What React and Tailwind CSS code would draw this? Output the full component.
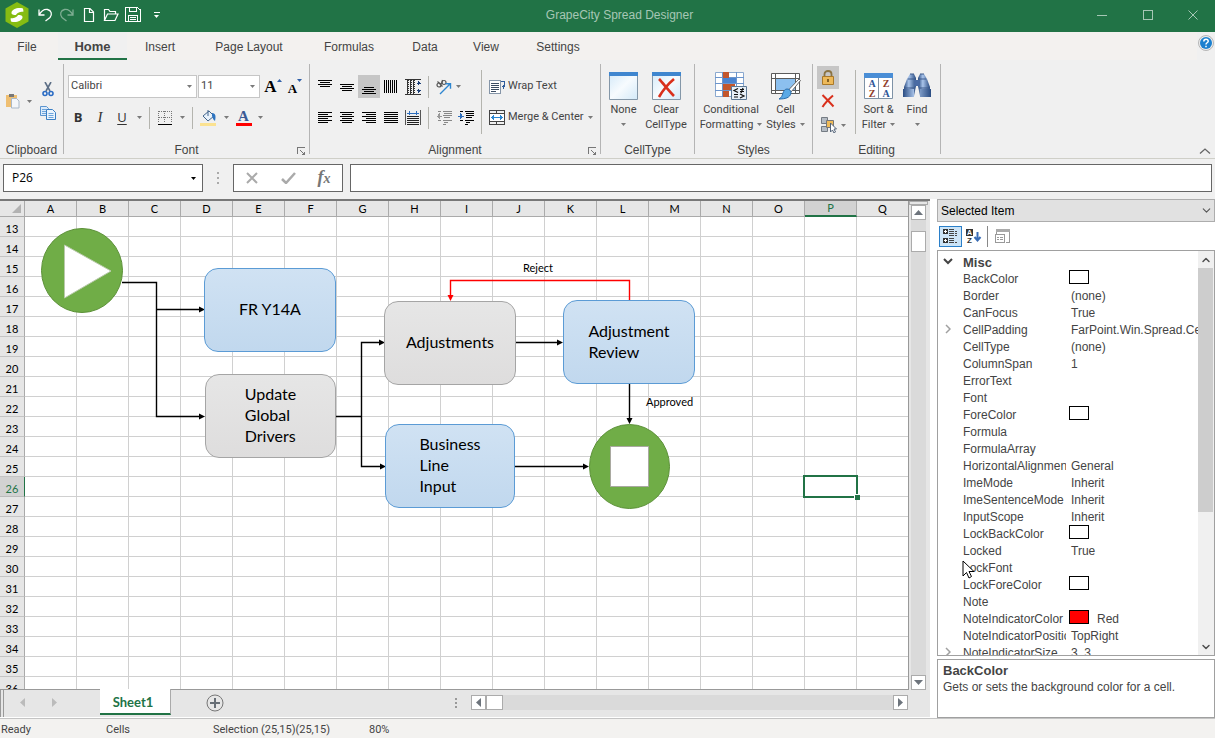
// App.jsx

import { ChevronDown, ChevronUp } from "lucide-react";

const TABS = [
  { name: "File", width: "w-[58px] pr-1" },
  { name: "Home", width: "w-[69px]", active: true },
  { name: "Insert", width: "w-[66px]" },
  { name: "Page Layout", width: "w-[112px]" },
  { name: "Formulas", width: "w-[88px]" },
  { name: "Data", width: "w-[64px]" },
  { name: "View", width: "w-[58px]" },
  { name: "Settings", width: "w-[86px]" },
];

const COLUMNS = "ABCDEFGHIJKLMNOPQ".split("");
const ROWS = Array.from({ length: 24 }, (_, i) => i + 13);

const PROPERTIES = [
  { name: "BackColor", swatch: "bg-white" },
  { name: "Border", value: "(none)" },
  { name: "CanFocus", value: "True" },
  { name: "CellPadding", value: "FarPoint.Win.Spread.CellPadding", expandable: true },
  { name: "CellType", value: "(none)" },
  { name: "ColumnSpan", value: "1" },
  { name: "ErrorText" },
  { name: "Font" },
  { name: "ForeColor", swatch: "bg-white" },
  { name: "Formula" },
  { name: "FormulaArray" },
  { name: "HorizontalAlignment", value: "General" },
  { name: "ImeMode", value: "Inherit" },
  { name: "ImeSentenceMode", value: "Inherit" },
  { name: "InputScope", value: "Inherit" },
  { name: "LockBackColor", swatch: "bg-white" },
  { name: "Locked", value: "True" },
  { name: "LockFont", cursor: true },
  { name: "LockForeColor", swatch: "bg-white" },
  { name: "Note" },
  { name: "NoteIndicatorColor", value: "Red", swatch: "bg-[#ff0000]" },
  { name: "NoteIndicatorPosition", value: "TopRight" },
  { name: "NoteIndicatorSize", value: "3, 3", expandable: true },
];

/* ---------- Small shared pieces ---------- */

function Arrow({ className = "text-[#7a7a7a]" }) {
  return (
    <svg width="5" height="3" viewBox="0 0 5 3" className={`shrink-0 ${className}`} aria-hidden="true">
      <path d="M0 0h5L2.5 3z" fill="currentColor" />
    </svg>
  );
}

function Icon({ w = 16, h = 16, crisp, children }) {
  return (
    <svg
      width={w}
      height={h}
      viewBox={`0 0 ${w} ${h}`}
      fill="none"
      className="shrink-0"
      shapeRendering={crisp ? "crispEdges" : "auto"}
      aria-hidden="true"
    >
      {children}
    </svg>
  );
}

function ToolButton({ label, className = "w-[22px]", active, children }) {
  return (
    <button
      type="button"
      aria-label={label}
      className={`flex h-[23px] shrink-0 items-center justify-center ${className} ${active ? "bg-[#c6c6c6]" : ""}`}
    >
      {children}
    </button>
  );
}

function Divider({ className = "h-[22px]" }) {
  return <div className={`w-px shrink-0 bg-[#b4b4ae] ${className}`} />;
}

function Group({ title, width, launcher, children }) {
  return (
    <section className={`flex h-[90px] shrink-0 flex-col border-r border-[#b4b4b4] ${width}`}>
      <div className="flex-1">{children}</div>
      <div className="relative h-[14px] text-center text-xs leading-5 text-[#444]">
        {title}
        {launcher && (
          <button type="button" aria-label={`${title} settings`} className="absolute right-1 top-[7px]">
            <Icon w={8} h={8} crisp>
              <path d="M0 6V0h7M3 3l4 4M7 4v3H4" stroke="#777" transform="translate(.5 .5)" />
            </Icon>
          </button>
        )}
      </div>
    </section>
  );
}

function BigButton({ lines, width, arrow, children }) {
  return (
    <button
      type="button"
      className={`flex shrink-0 flex-col items-center pt-[5px] font-[Roboto] text-[11px] leading-[15px] text-[#444] ${width}`}
    >
      <span className="flex h-[33px] items-center justify-center">{children}</span>
      <span className="whitespace-nowrap">{lines[0]}</span>
      <span className="flex h-[15px] items-center gap-1 whitespace-nowrap">
        {lines[1]}
        {arrow && <Arrow />}
      </span>
    </button>
  );
}

/* ---------- Title bar ---------- */

function TitleBar() {
  return (
    <header className="flex h-8 shrink-0 items-center bg-[#217346] pb-[2px]">
      <div className="flex items-center pl-1">
        <Icon w={26} h={28}>
          <path d="M13 1l11.500 6.500v13L13 27 1.500 20.500v-13z" fill="#86bc12" />
          <path d="M19 7.500c-5-1.500-11 .5-11.500 4-.3 2 2 2.500 4.500 2.500 1.500-3 5-3 7.500-3.500z" fill="#fff" />
          <path d="M7 20.500c5 1.500 11-.5 11.500-4 .3-2-2-2.500-4.500-2.500-1.500 3-5 3-7.500 3.500z" fill="#fff" />
        </Icon>
        <button type="button" aria-label="Undo" className="ml-[7px]">
          <Icon w={16} h={16}>
            <path d="M2 2.500V8h5.500M2 8c3-5 6-6 8.500-5.500 4 .8 5 5 2.500 8L8.500 14" stroke="#fff" strokeWidth="1.300" />
          </Icon>
        </button>
        <button type="button" aria-label="Redo" className="ml-[6px]">
          <Icon w={16} h={16}>
            <path d="M14 2.500V8H8.500M14 8C11 3 8 2 5.500 2.500c-4 .8-5 5-2.500 8L7.500 14" stroke="#7fae93" strokeWidth="1.300" />
          </Icon>
        </button>
        <button type="button" aria-label="New" className="ml-2">
          <Icon w={12} h={16}>
            <path d="M1.500 1.500h5.500l3.500 3.500v9.500h-9zM6.500 1.500v4h4" stroke="#fff" strokeWidth="1.200" />
          </Icon>
        </button>
        <button type="button" aria-label="Open" className="ml-2">
          <Icon w={16} h={14}>
            <path d="M1.500 12.500V1.500h4l1.500 2h5.500v2.500M1.500 12.500l3-6.500h10.500l-3 6.500z" stroke="#fff" strokeWidth="1.200" />
          </Icon>
        </button>
        <button type="button" aria-label="Save" className="ml-[6px]">
          <Icon w={16} h={16} crisp>
            <path d="M.5.5h12l3 2.500v11.500H.5zM4.500.5v4h7v-4M3.500 14V8.500h9V14M5 10.500h6M5 12.500h6" stroke="#fff" />
          </Icon>
        </button>
        <button type="button" aria-label="Customize" className="ml-3 flex w-[7px] flex-col items-center gap-[2px]">
          <span className="h-px w-[6px] bg-white" />
          <Arrow className="text-white" />
        </button>
      </div>
      <h1 className="flex-1 text-center text-xs text-[#a6c7b5]">GrapeCity Spread Designer</h1>
      <div className="flex">
        <button type="button" aria-label="Minimize" className="flex w-[46px] items-center justify-center">
          <Icon w={10} h={10} crisp><path d="M0 5.500h10" stroke="#a6c7b5" /></Icon>
        </button>
        <button type="button" aria-label="Maximize" className="flex w-[46px] items-center justify-center">
          <Icon w={10} h={10} crisp><path d="M.5.5h9v9h-9z" stroke="#a6c7b5" /></Icon>
        </button>
        <button type="button" aria-label="Close" className="flex w-[44px] items-center justify-center">
          <Icon w={10} h={10}><path d="M.5.5l9 9M9.500.5l-9 9" stroke="#a6c7b5" /></Icon>
        </button>
      </div>
    </header>
  );
}

/* ---------- Ribbon ---------- */

function RibbonTabs() {
  return (
    <nav className="flex h-7 shrink-0 bg-[#f3f1ef]">
      {TABS.map((tab) => (
        <button
          key={tab.name}
          type="button"
          className={`h-7 border-b-2 pt-[3px] text-[#444] ${tab.width} ${
            tab.active ? "border-[#217346] bg-[#f0f0f0] text-[13px] font-bold" : "border-transparent text-xs"
          }`}
        >
          {tab.name}
        </button>
      ))}
      <button type="button" aria-label="Help" className="ml-auto flex w-[18px] justify-center bg-[#f0f0f0] pt-[3px]">
        <Icon w={16} h={16}>
          <circle cx="8" cy="8" r="7.500" fill="#eee" stroke="#b5b5b5" />
          <circle cx="8" cy="8" r="6" fill="#1b80cf" />
          <path d="M5.800 6.500c0-3 4.400-3 4.400-.3 0 1.600-2.200 1.500-2.200 3.300M8 10.800v1.500" stroke="#fff" strokeWidth="1.500" />
        </Icon>
      </button>
    </nav>
  );
}

function ClipboardGroup() {
  return (
    <Group title="Clipboard" width="w-16">
      <div className="flex pl-[5px]">
        <button type="button" aria-label="Paste" className="flex h-[74px] items-center gap-[7px]">
          <Icon w={15} h={16}>
            <path d="M1 2h11v12H1z" fill="#efbf72" />
            <path d="M4 1h5v3H4z" fill="#777" />
            <path d="M6.500 5.500h5l2.500 2.500v7H6.500z" fill="#f3f6fa" stroke="#a9b8c8" />
          </Icon>
          <Arrow />
        </button>
        <div className="flex flex-col pl-[7px] pt-[14px]">
          <ToolButton label="Cut" className="w-[17px]">
            <Icon w={12} h={15}>
              <path d="M3 0l5 9M9 0L4 9" stroke="#5d6f86" strokeWidth="1.600" />
              <circle cx="3" cy="11.500" r="2" stroke="#2b6cc4" strokeWidth="1.600" />
              <circle cx="9" cy="11.500" r="2" stroke="#2b6cc4" strokeWidth="1.600" />
            </Icon>
          </ToolButton>
          <ToolButton label="Copy" className="w-[17px]">
            <Icon w={16} h={14}>
              <path d="M.5.5h6l2 2v7h-8z" fill="#dcebfa" stroke="#5b94cf" />
              <path d="M6.500 3.500h6l3 3v7h-9z" fill="#eaf4fd" stroke="#3b7fc4" />
              <path d="M2 3.500h4M2 5.500h4M2 7.500h4M8.500 7.500h5M8.500 9.500h5M8.500 11.500h5" stroke="#6ea5dc" />
            </Icon>
          </ToolButton>
        </div>
      </div>
    </Group>
  );
}

function RibbonSelect({ label, value, width }) {
  return (
    <div className={`relative ${width}`}>
      <select
        aria-label={label}
        defaultValue={value}
        className="block h-[23px] w-full appearance-none border border-[#c6c6c6] bg-white pl-[2px] font-[Roboto] text-[11px] text-[#444]"
      >
        <option>{value}</option>
      </select>
      <div className="pointer-events-none absolute inset-y-0 right-[5px] flex items-center">
        <Arrow />
      </div>
    </div>
  );
}

function FontGroup() {
  return (
    <Group title="Font" width="w-[246px]" launcher>
      <div className="flex items-center pl-1 pt-[11px]">
        <RibbonSelect label="Font name" value="Calibri" width="w-[129px]" />
        <div className="w-px" />
        <RibbonSelect label="Font size" value="11" width="w-[62px]" />
        <div className="w-[2px]" />
        <ToolButton label="Grow font">
          <span className="font-['Liberation_Serif'] text-[17px] font-bold leading-none text-black">A</span>
          <svg width="5" height="3" className="mb-3"><path d="M0 3h5L2.500 0z" fill="#2f5fa8" /></svg>
        </ToolButton>
        <ToolButton label="Shrink font">
          <span className="pt-1 font-['Liberation_Serif'] text-[13px] font-bold leading-none text-black">A</span>
          <svg width="5" height="3" className="mb-3"><path d="M0 0h5L2.500 3z" fill="#2f5fa8" /></svg>
        </ToolButton>
      </div>
      <div className="flex items-center pl-[3px] pt-2 font-['Open_Sans'] text-[13px] text-[#333]">
        <ToolButton label="Bold"><b>B</b></ToolButton>
        <ToolButton label="Italic"><i className="font-['Liberation_Serif'] text-[15px]">I</i></ToolButton>
        <ToolButton label="Underline"><span className="underline underline-offset-2">U</span></ToolButton>
        <ToolButton label="Underline style" className="w-[12px]"><Arrow /></ToolButton>
        <div className="w-1" />
        <Divider />
        <ToolButton label="Borders" className="w-[42px] gap-2">
          <Icon w={14} h={14} crisp>
            <path d="M.5.500h13M.5 6.500h13M.5 0v12M6.500 0v12M13.500 0v12" stroke="#777" strokeDasharray="1 1" />
            <path d="M0 13h14" stroke="#000" strokeWidth="1" />
          </Icon>
          <Arrow />
        </ToolButton>
        <Divider />
        <ToolButton label="Fill color" className="w-[42px] gap-[7px]">
          <Icon w={17} h={17}>
            <path d="M3 7l6-5 5 5-6 5z" fill="#e7f1fb" stroke="#43658c" />
            <path d="M8 7V1" stroke="#43658c" />
            <path d="M12 4c4 0 4 4 3 8-2-1-2-3-3-5z" fill="#2e74c0" />
            <path d="M0 14h16v3H0z" fill="#fbe291" />
          </Icon>
          <Arrow />
        </ToolButton>
        <ToolButton label="Font color" className="w-[28px] gap-[6px]">
          <span className="flex w-4 flex-col items-center border-b-[3px] border-[#ff0000] font-['Liberation_Serif'] text-[15px] font-bold leading-[13px] text-[#3a5a95]">
            A
          </span>
          <Arrow />
        </ToolButton>
      </div>
    </Group>
  );
}

function HLines({ d, color = "#000" }) {
  return (
    <Icon w={14} h={14} crisp>
      <path d={d} stroke={color} />
    </Icon>
  );
}

function AlignmentGroup() {
  return (
    <Group title="Alignment" width="w-[291px]" launcher>
      <div className="flex pl-1">
        <div className="pt-[11px]">
          <div className="flex items-center">
            <ToolButton label="Align top"><HLines d="M0 .5h14M2 2.500h10M0 4.500h14M2 6.500h10" /></ToolButton>
            <ToolButton label="Align middle"><HLines d="M0 4.500h14M2 6.500h10M0 8.500h14M2 10.500h10" /></ToolButton>
            <ToolButton label="Align bottom" active><HLines d="M2 7.500h10M0 9.500h14M2 11.500h10M0 13.500h14" /></ToolButton>
            <ToolButton label="Vertical justify">
              <HLines d="M.5 0v13M2.500 0v13M4.500 0v13M6.500 0v13M8.500 0v13M10.500 0v13M12.500 0v13" />
            </ToolButton>
            <ToolButton label="Vertical distribute">
              <Icon w={16} h={16} crisp>
                <path d="M0 .5h16M0 15.500h16M2.500 1v14M5.500 1v14M8.500 1v14" stroke="#333" />
                <path d="M3.500 1v14M6.500 1v14M9.500 1v14" stroke="#333" strokeDasharray="1 1" />
                <path d="M13.500 2v4M13.500 10v4M11.500 4.500h4M11.500 11.500h4M12.500 3.500h2M12.500 12.500h2" stroke="#1c3f77" />
              </Icon>
            </ToolButton>
            <div className="w-1" />
            <Divider />
            <ToolButton label="Orientation" className="w-[38px] gap-1">
              <Icon w={17} h={16}>
                <circle cx="4" cy="6" r="2" stroke="#555" strokeWidth="1.200" />
                <path d="M2.500 2.500l5 5M7.500 1l-1 4" stroke="#555" strokeWidth="1.200" />
                <circle cx="9" cy="3.500" r="2" stroke="#555" strokeWidth="1.200" />
                <path d="M5 15L15 5M10.500 4.800h5v5" stroke="#2e86d0" strokeWidth="1.400" />
              </Icon>
              <Arrow />
            </ToolButton>
          </div>
          <div className="flex items-center pt-2">
            <ToolButton label="Align left">
              <HLines d="M0 1.500h14M0 3.500h10M0 5.500h14M0 7.500h10M0 9.500h14M0 11.500h10" />
            </ToolButton>
            <ToolButton label="Align center">
              <HLines d="M0 1.500h14M2 3.500h10M0 5.500h14M2 7.500h10M0 9.500h14M2 11.500h10" />
            </ToolButton>
            <ToolButton label="Align right">
              <HLines d="M0 1.500h14M4 3.500h10M0 5.500h14M4 7.500h10M0 9.500h14M4 11.500h10" />
            </ToolButton>
            <ToolButton label="Justify">
              <HLines d="M0 1.500h14M0 3.500h14M0 5.500h14M0 7.500h14M0 9.500h14M0 11.500h14" />
            </ToolButton>
            <ToolButton label="Distribute">
              <Icon w={16} h={16} crisp>
                <path d="M.5 0v15M15.500 0v15" stroke="#555" />
                <path d="M2 3h12M4.500 1v4M11.500 1v4" stroke="#2f6fbd" />
                <path d="M2 6.500h12M2 8.500h12M2 10.500h12M2 12.500h12M2 14.500h12" stroke="#222" />
              </Icon>
            </ToolButton>
            <div className="w-1" />
            <Divider />
            <div className="w-1" />
            <ToolButton label="Decrease indent">
              <Icon w={16} h={14} crisp>
                <path d="M2 .5h3M7 .5h9M8 2.500h8M7 4.500h9M8 6.500h6M2 9.500h3M7 9.500h9M8 11.500h4M7 13.500h3" stroke="#888" />
                <path d="M1 5h5M2.500 3v4M3.500 2v6" stroke="#999" />
              </Icon>
            </ToolButton>
            <ToolButton label="Increase indent">
              <Icon w={16} h={14} crisp>
                <path d="M2 .5h3M7 .5h9M8 2.500h8M8 4.500h8M8 6.500h6M2 9.500h3M7 9.500h9M8 11.500h4M7 13.500h3" stroke="#000" />
                <path d="M0 5h6M3.500 3v4M2.500 2v6" stroke="#2f6fbd" />
              </Icon>
            </ToolButton>
          </div>
        </div>
        <div className="pl-1 pt-[6px]">
          <Divider className="h-16" />
        </div>
        <div className="flex flex-col gap-2 pl-[7px] pt-[11px] font-[Roboto] text-[11px] text-[#444]">
          <button type="button" className="flex h-[23px] items-center gap-[2px]">
            <Icon w={17} h={16} crisp>
              <path d="M.5 1.500h11v13H.5z" fill="#fff" stroke="#8595a8" />
              <path d="M2 4.500h8M2 6.500h8M2 8.500h8M2 10.500h8M2 12.500h5" stroke="#3c4d63" />
              <path d="M12 2.500h3.500v5H13M14 5.500v4" stroke="#2e5c9c" />
            </Icon>
            Wrap Text
          </button>
          <button type="button" className="flex h-[23px] items-center">
            <Icon w={16} h={16} crisp>
              <path d="M.5.5h15v14H.5zM0 3.500h16M0 11.500h16M7.500 0v3M7.500 12v3" stroke="#444" />
              <path d="M1 4h14v7H1z" fill="#fff" />
              <path d="M2 7.500h12M4.500 5v5M3.500 6v3M11.500 5v5M12.500 6v3" stroke="#2b86d1" />
            </Icon>
            <span className="whitespace-nowrap pl-[3px] pr-1">Merge &amp; Center</span>
            <Arrow />
          </button>
        </div>
      </div>
    </Group>
  );
}

function WindowShape() {
  return (
    <>
      <defs>
        <linearGradient id="sheetFill" x1="0" y1="0" x2="1" y2="1">
          <stop offset="0" stopColor="#d3e9f8" />
          <stop offset=".5" stopColor="#f7fbfe" />
          <stop offset="1" stopColor="#d3e9f8" />
        </linearGradient>
      </defs>
      <path d="M.5.5h28v27H.5z" fill="url(#sheetFill)" stroke="#8497a8" />
      <path d="M0 0h29v4H0z" fill="#3f86cf" />
    </>
  );
}

function CellTypeGroup() {
  return (
    <Group title="CellType" width="w-[94px]">
      <div className="flex pl-[2px]">
        <BigButton lines={["None", ""]} width="w-[41px]" arrow>
          <Icon w={29} h={28}><WindowShape /></Icon>
        </BigButton>
        <BigButton lines={["Clear", "CellType"]} width="w-[44px]">
          <Icon w={29} h={28}>
            <WindowShape />
            <path d="M7 7c4 4 9 11 15 17M22 7C16 12 11 18 7 25" stroke="#d9301c" strokeWidth="2.600" />
          </Icon>
        </BigButton>
      </div>
    </Group>
  );
}

function StylesGroup() {
  return (
    <Group title="Styles" width="w-[118px]">
      <div className="flex pl-1">
        <BigButton lines={["Conditional", "Formatting"]} width="w-[64px]" arrow>
          <Icon w={32} h={30}>
            <path d="M.5 1.500h28v24H.5z" fill="#fff" stroke="#8ba9cf" />
            <path d="M0 6.500h29M0 12.500h29M0 19.500h29M7.500 1v25M21.500 1v25" stroke="#6c95cc" />
            <path d="M8 1h6v6H8zM8 13h12v6H8zM8 20h6v6H8z" fill="#c2562c" />
            <path d="M8 7h13v5H8z" fill="#4a83cf" />
            <path d="M16.500 15.500h15v13h-15z" fill="#e8f0f8" stroke="#5c7894" />
            <path d="M23 17.500l-4 2 4 2M19 23.500h4M25 18.500h4M25 20.500h4M28 17l-2 5M25 23l4 2-4 2M19 26h4" stroke="#111" strokeWidth="1.200" />
          </Icon>
        </BigButton>
        <BigButton lines={["Cell", "Styles"]} width="w-[45px]" arrow>
          <Icon w={32} h={30}>
            <path d="M1.500 2.500h28v20h-28zM1 7.500h29M5.500 2v21M25.500 2v21M1 19.500h29" fill="#fff" stroke="#5b5b5b" />
            <path d="M6 8h19v11H6z" fill="#8cc0ef" />
            <path d="M30.500 9.500L21 21l-2.500-2L29 8z" fill="#fff" stroke="#666" />
            <path d="M17 18c3 0 4 2 4 4-1 5-6 6-12 6 3-2 3-3 4-6 .5-2 2-4 4-4z" fill="#5aa9e6" stroke="#2a6dac" />
          </Icon>
        </BigButton>
      </div>
    </Group>
  );
}

function EditingGroup() {
  return (
    <Group title="Editing" width="w-[128px]">
      <div className="flex pl-1">
        <div className="flex w-[38px] flex-col pt-[2px]">
          <ToolButton label="Lock" active>
            <Icon w={14} h={15}>
              <path d="M3.500 7V4c0-4 7-4 7 0v3" stroke="#8b7342" strokeWidth="1.800" />
              <path d="M1.500 6.500h11v8h-11z" fill="#edb95a" stroke="#a97828" />
              <path d="M7 9v3" stroke="#6a4b16" strokeWidth="1.600" />
            </Icon>
          </ToolButton>
          <ToolButton label="Clear">
            <Icon w={14} h={14}>
              <path d="M1.500 1c3 3 7 7 11 11.500M12 1.500C8 5 4 9 1.500 13" stroke="#d9301c" strokeWidth="2" />
            </Icon>
          </ToolButton>
          <button type="button" aria-label="Select" className="flex h-[26px] items-center gap-1 pl-1">
            <Icon w={16} h={16}>
              <path d="M.5.5h6v6h-6zM.5 9.500h6v5h-6z" fill="#b5bcc4" stroke="#747b83" />
              <path d="M5.500 3.500h7v7h-7z" fill="#f0bb58" stroke="#777" />
              <path d="M9.500 6v9l2-2 1.500 3 1.500-1-1.500-3h2.500z" fill="#fff" stroke="#55657a" />
            </Icon>
            <Arrow />
          </button>
        </div>
        <div className="pt-[6px]">
          <Divider className="h-16" />
        </div>
        <BigButton lines={["Sort &", "Filter"]} width="w-[45px]" arrow>
          <Icon w={29} h={28}>
            <path d="M.5 1.500h28v25H.5zM14.500 5v21" fill="#fff" stroke="#7e92a6" />
            <path d="M0 1h29v5H0z" fill="#4a8ed6" />
            <g fontFamily="Liberation Serif" fontSize="10" fontWeight="bold" textAnchor="middle">
              <text x="8" y="15" fill="#2d5597">A</text>
              <text x="8" y="25" fill="#8e3b2b">Z</text>
              <text x="22" y="15" fill="#8e3b2b">Z</text>
              <text x="22" y="25" fill="#2d5597">A</text>
            </g>
          </Icon>
        </BigButton>
        <BigButton lines={["Find", ""]} width="w-[32px]" arrow>
          <Icon w={28} h={28}>
            <defs>
              <linearGradient id="lens">
                <stop offset="0" stopColor="#2a4c82" />
                <stop offset=".4" stopColor="#a9c4ea" />
                <stop offset="1" stopColor="#2a4c82" />
              </linearGradient>
            </defs>
            <path d="M7 2h4l2 4v8l-2 10H1V15L4 7z" fill="url(#lens)" />
            <path d="M21 2h-4l-2 4v8l2 10h10V15l-3-8z" fill="url(#lens)" />
            <path d="M11 8h6v6h-6z" fill="#4a6ba3" />
            <path d="M0 17h11v8H0zM17 17h11v8H17z" fill="url(#lens)" />
            <path d="M7 2h4M17 2h4M5 7h8M15 7h8M1 16h11M16 16h11" stroke="#3d5a8c" />
          </Icon>
        </BigButton>
      </div>
    </Group>
  );
}

function Ribbon() {
  return (
    <div className="flex h-[99px] shrink-0 border-b border-[#cfcfc8] pt-1">
      <ClipboardGroup />
      <FontGroup />
      <AlignmentGroup />
      <CellTypeGroup />
      <StylesGroup />
      <EditingGroup />
      <button type="button" aria-label="Collapse ribbon" className="ml-auto self-end pb-1 pr-1">
        <Icon w={12} h={6}><path d="M1 5.500l5-4.500 5 4.500" stroke="#666" strokeWidth="1.300" /></Icon>
      </button>
    </div>
  );
}

function FormulaBar() {
  return (
    <div className="flex h-10 shrink-0 items-start pl-[3px] pr-[3px] pt-[5px]">
      <div className="flex h-7 w-[200px] shrink-0 items-center border border-[#666] bg-white pr-[6px]">
        <input
          aria-label="Name box"
          defaultValue="P26"
          className="min-w-0 flex-1 bg-transparent pl-2 font-['Open_Sans'] text-xs text-black outline-none"
        />
        <button type="button" aria-label="Open name list"><Arrow className="text-black" /></button>
      </div>
      <div className="flex h-7 w-[30px] shrink-0 flex-col items-center justify-center gap-[3px]">
        <span className="h-[2px] w-[2px] bg-[#aaa]" />
        <span className="h-[2px] w-[2px] bg-[#aaa]" />
        <span className="h-[2px] w-[2px] bg-[#aaa]" />
      </div>
      <div className="mr-[7px] flex h-7 w-[110px] shrink-0 items-center border border-[#666] bg-white">
        <button type="button" aria-label="Cancel" className="flex w-9 justify-center">
          <Icon w={12} h={12}><path d="M1 1l10 10M11 1L1 11" stroke="#aaa" strokeWidth="2" /></Icon>
        </button>
        <button type="button" aria-label="Enter" className="flex w-9 justify-center">
          <Icon w={15} h={12}><path d="M1 7l4 4L14 1" stroke="#aaa" strokeWidth="2.500" /></Icon>
        </button>
        <button
          type="button"
          aria-label="Insert function"
          className="w-9 font-['Liberation_Serif'] text-lg font-bold italic leading-none text-[#777]"
        >
          f<span className="text-sm">x</span>
        </button>
      </div>
      <input aria-label="Formula" className="h-7 min-w-0 flex-1 border border-[#666] bg-white px-2 text-xs outline-none" />
    </div>
  );
}

/* ---------- Spreadsheet ---------- */

function Node({ place, gray, children }) {
  return (
    <div
      className={`absolute flex items-center justify-center rounded-[14px] border bg-gradient-to-b pb-[3px] font-[Lato] text-base leading-[21px] text-black ${place} ${
        gray ? "border-[#a5a5a5] from-[#e6e6e6] to-[#dedddd]" : "border-[#5b9bd5] from-[#d0e2f3] to-[#c1d8ee]"
      }`}
    >
      <p>{children}</p>
    </div>
  );
}

function Diagram() {
  return (
    <div className="pointer-events-none absolute left-0 top-0">
      <svg width="720" height="320" viewBox="0 0 720 320" fill="none" className="absolute left-0 top-0">
        {/* Connectors */}
        <g stroke="#000" strokeWidth="1.400">
          <path d="M97 65.500h34.500v27H175M131.500 92.500v107H175" />
          <path d="M311 199.500h25.500v-74H355M336.500 199.500v50H356" />
          <path d="M491 125.500h43M490 249.500h70M604.500 167v36" />
        </g>
        <path d="M604.500 83V63.500h-179V80" stroke="#f00" strokeWidth="1.400" />
        <path
          d="M174 89.500l6 3-6 3zM174 196.500l6 3-6 3zM354 122.500l6 3-6 3zM355 246.500l6 3-6 3zM532 122.500l6 3-6 3zM558 246.500l6 3-6 3zM601.500 201l3 6 3-6z"
          fill="#000"
        />
        <path d="M422.500 78l3 6 3-6z" fill="#f00" />
        {/* Start and stop */}
        <ellipse cx="57" cy="53.500" rx="40.500" ry="42" fill="#70ad47" stroke="#5c9138" />
        <path d="M39.500 28v53L86 54z" fill="#fff" stroke="#b9c9ab" />
        <ellipse cx="604.500" cy="249.500" rx="40" ry="42" fill="#70ad47" stroke="#5c9138" />
        <path d="M585.500 229.500h38v40h-38z" fill="#fff" stroke="#a9a9a0" />
      </svg>
      <Node place="left-[179px] top-[51px] h-[84px] w-[132px]">FR Y14A</Node>
      <Node place="left-[180px] top-[157px] h-[84px] w-[131px]" gray>Update<br />Global<br />Drivers</Node>
      <Node place="left-[359px] top-[84px] h-[84px] w-[132px]" gray>Adjustments</Node>
      <Node place="left-[538px] top-[83px] h-[84px] w-[132px]">Adjustment<br />Review</Node>
      <Node place="left-[360px] top-[207px] h-[84px] w-[130px]">Business<br />Line<br />Input</Node>
      <span className="absolute left-[498px] top-[43px] font-[Lato] text-[11px] leading-4 text-black">Reject</span>
      <span className="absolute left-[621px] top-[177px] font-[Lato] text-[11px] leading-4 text-black">Approved</span>
    </div>
  );
}

function SheetGrid() {
  return (
    <div className="relative min-w-0 flex-1 overflow-hidden border-b border-r border-[#999] bg-white">
      <table className="w-[909px] table-fixed border-separate border-spacing-0 font-[Lato] text-[11px] text-black">
        <thead>
          <tr className="h-4">
            <th className="h-4 w-[25px] border-b border-r border-[#aaa] bg-[#e6e6e6] p-0" aria-label="Select all">
              <svg width="9" height="9" className="ml-[12px]"><path d="M9 0v9H0z" fill="#b2b2b2" /></svg>
            </th>
            {COLUMNS.map((col) => (
              <th
                key={col}
                className={`h-4 p-0 font-normal leading-[14px] ${
                  col === "P"
                    ? "border-b-2 border-r border-b-[#217346] border-r-[#aaa] bg-[#d2d2d2] text-[#217346]"
                    : "border-b border-r border-[#aaa] bg-[#e6e6e6]"
                }`}
              >
                {col}
              </th>
            ))}
          </tr>
        </thead>
        <tbody>
          {ROWS.map((row) => (
            <tr key={row} className="h-5">
              <th
                className={`h-5 border-b border-r p-0 pt-1 font-normal leading-[14px] ${
                  row === 26
                    ? "border-b-[#bbb] border-r-[#217346] bg-[#d2d2d2] text-[#217346]"
                    : "border-b-[#c4c4c4] border-r-[#aaa] bg-[#e6e6e6]"
                }`}
              >
                {row}
              </th>
              {COLUMNS.map((col) => (
                <td key={col} className="relative h-5 border-b border-r border-[#d0d0d0] p-0">
                  {row === 26 && col === "P" && (
                    <div className="absolute -inset-[2px] z-10 border-2 border-[#217346]">
                      <div className="absolute -bottom-1 -right-1 h-[6px] w-[6px] border-l border-t border-white bg-[#217346]" />
                    </div>
                  )}
                </td>
              ))}
            </tr>
          ))}
        </tbody>
      </table>
      <div className="absolute left-[25px] top-4">
        <Diagram />
      </div>
    </div>
  );
}

function ScrollButton({ label, d }) {
  return (
    <button
      type="button"
      aria-label={label}
      className="flex h-[15px] w-[15px] shrink-0 items-center justify-center border border-[#ababab] bg-white"
    >
      <Icon w={9} h={9}><path d={d} fill="#6d747c" /></Icon>
    </button>
  );
}

function SheetTabs() {
  return (
    <div className="mb-px flex h-[27px] shrink-0 bg-[#e6e6e6]">
      <div className="w-1 border-l border-r border-[#999]" />
      <button type="button" aria-label="Previous sheet" className="flex w-9 items-center justify-center pb-[2px]">
        <Icon w={5} h={9}><path d="M5 0v9L0 4.500z" fill="#bbb" /></Icon>
      </button>
      <button type="button" aria-label="Next sheet" className="flex w-7 items-center justify-center pb-[2px]">
        <Icon w={5} h={9}><path d="M0 0v9l5-4.500z" fill="#bbb" /></Icon>
      </button>
      <div className="w-8" />
      <button
        type="button"
        className="relative -mt-px h-[26px] w-[71px] border-b-2 border-r border-b-[#217346] border-r-[#aaa] bg-white pr-1 pt-[3px] font-[Lato] text-[13px] font-bold text-[#217346]"
      >
        Sheet1
      </button>
      <button type="button" aria-label="Add sheet" className="ml-[35px] pb-[2px]">
        <Icon w={18} h={18}>
          <circle cx="9" cy="9" r="8" stroke="#777" />
          <path d="M9 4v10M4 9h10" stroke="#666d75" strokeWidth="2" />
        </Icon>
      </button>
      <div className="ml-auto flex w-[475px] items-start pt-[5px]">
        <div className="flex h-[15px] w-4 flex-col justify-center gap-[2px]">
          <span className="h-[2px] w-[2px] bg-[#999]" />
          <span className="h-[2px] w-[2px] bg-[#999]" />
          <span className="h-[2px] w-[2px] bg-[#999]" />
        </div>
        <ScrollButton label="Scroll left" d="M7 0v9L2 4.500z" />
        <div className="flex-1 bg-[#dadada]">
          <div className="h-[15px] w-[17px] border border-[#ababab] bg-white" />
        </div>
        <ScrollButton label="Scroll right" d="M2 0v9l5-4.500z" />
        <div className="w-[22px]" />
      </div>
    </div>
  );
}

function Sheet() {
  return (
    <div className="flex min-w-0 flex-1 flex-col border-t-2 border-[#777]">
      <div className="flex min-h-0 flex-1">
        <SheetGrid />
        <div className="flex w-[21px] shrink-0 flex-col items-center bg-[#e6e6e6] pr-[2px]">
          <div className="h-1 w-[19px] shrink-0 border border-[#ababab]" />
          <ScrollButton label="Scroll up" d="M0 7h9L4.500 2z" />
          <div className="w-[15px] flex-1 bg-[#dadada] pt-[11px]">
            <div className="h-[21px] border border-[#ababab] bg-white" />
          </div>
          <ScrollButton label="Scroll down" d="M0 2h9L4.500 7z" />
        </div>
      </div>
      <SheetTabs />
    </div>
  );
}

/* ---------- Property panel ---------- */

function PropertyRow({ item }) {
  return (
    <tr className="h-[17px]">
      <td className="relative h-[17px] p-0">
        {item.expandable && (
          <svg width="6" height="10" className="absolute left-[7px] top-[2px]" fill="none" aria-hidden="true">
            <path d="M1 1l4 4-4 4" stroke="#a0a0a0" strokeWidth="1.500" />
          </svg>
        )}
        {item.cursor && (
          <svg width="13" height="20" className="absolute left-6 top-0 z-10" aria-hidden="true">
            <path d="M1 1v15l3.500-3.500L7 18l2.500-1.500L7 11.500h5z" fill="#fff" stroke="#000" />
          </svg>
        )}
      </td>
      <td className="h-[17px] p-0">
        <div className="overflow-hidden whitespace-nowrap">{item.name}</div>
      </td>
      <td className="h-[17px] whitespace-nowrap p-0">
        <div className="flex h-[17px] items-start pl-[3px]">
          {item.swatch && <span className={`-mt-px mr-[6px] h-[14px] w-5 shrink-0 border border-black ${item.swatch}`} />}
          <span className="pl-[2px]">{item.value}</span>
        </div>
      </td>
    </tr>
  );
}

function PropertyPanel() {
  return (
    <aside className="ml-[7px] flex w-[278px] shrink-0 flex-col text-xs text-[#444]">
      <div className="relative shrink-0">
        <select
          aria-label="Selected object"
          defaultValue="Selected Item"
          className="block h-[23px] w-full appearance-none border border-[#adadad] bg-[#e1e1e1] pl-[3px] text-xs text-black"
        >
          <option>Selected Item</option>
        </select>
        <ChevronDown size={13} strokeWidth={2} className="pointer-events-none absolute right-[2px] top-[5px] text-[#555]" />
      </div>

      <div className="flex h-7 shrink-0 items-center pl-[2px]">
        <button
          type="button"
          aria-label="Categorized"
          className="flex h-[21px] w-[23px] items-center justify-center border border-[#2a7fc9] bg-[#cce4f7]"
        >
          <Icon w={15} h={15} crisp>
            <path d="M0 0h5v5H0zM0 9h5v5H0z" fill="#333" />
            <path d="M1 2.500h3M2.500 1v3M1 11.500h3M2.500 10v3" stroke="#fff" />
            <path d="M6 .5h5M6 2.500h5M6 4.500h5M6 6.500h5M6 9.500h5M6 11.500h5M6 13.500h5M12 2.500h2M12 4.500h2M12 6.500h2M12 13.500h2" stroke="#444" />
          </Icon>
        </button>
        <button type="button" aria-label="Alphabetical" className="ml-1">
          <Icon w={16} h={15}>
            <path d="M0 0h7v7H0z" fill="#333" />
            <text x="3.500" y="6" fontSize="7" fontWeight="bold" fill="#fff" textAnchor="middle">A</text>
            <text x="3.500" y="14" fontSize="8" fontWeight="bold" fill="#333" textAnchor="middle">Z</text>
            <path d="M11.500 3v8M8.500 8l3 3.500 3-3.500" stroke="#3a6cb5" strokeWidth="2" />
          </Icon>
        </button>
        <div className="ml-[5px] h-[21px] w-px bg-[#888]" />
        <button type="button" aria-label="Property pages" className="ml-[7px]">
          <Icon w={15} h={14} crisp>
            <path d="M1 0h14v3H1z" fill="#aaa" />
            <path d="M1.500 3v2M14.500 3v10H11M.5 5.500h9v8h-9z" stroke="#999" />
            <path d="M2 8.500h2M5 8.500h3M2 10.500h2M5 10.500h3" stroke="#999" />
          </Icon>
        </button>
      </div>

      <div className="flex min-h-0 flex-1 border border-[#a0a0a0] bg-white">
        <div className="min-w-0 flex-1 overflow-hidden pt-[3px]">
          <table className="w-full table-fixed border-separate border-spacing-0 leading-[17px]">
            <colgroup>
              <col className="w-[25px]" />
              <col className="w-[103px]" />
              <col />
            </colgroup>
            <tbody>
              <tr className="h-[17px]">
                <td className="p-0 align-top">
                  <svg width="10" height="7" className="ml-[5px] mt-1" fill="none" aria-hidden="true">
                    <path d="M1 1l4 4 4-4" stroke="#444" strokeWidth="2" />
                  </svg>
                </td>
                <th colSpan={2} className="h-[17px] p-0 text-left text-[13px] font-bold">Misc</th>
              </tr>
              {PROPERTIES.map((item) => (
                <PropertyRow key={item.name} item={item} />
              ))}
            </tbody>
          </table>
        </div>
        <div className="flex w-4 shrink-0 flex-col bg-[#f0f0f0] pr-px">
          <button type="button" aria-label="Scroll up" className="flex h-[17px] items-center justify-center">
            <ChevronUp size={12} strokeWidth={3} className="text-[#505050]" />
          </button>
          <div className="flex-1">
            <div className="h-[66%] bg-[#cdcdcd]" />
          </div>
          <button type="button" aria-label="Scroll down" className="flex h-[17px] items-center justify-center">
            <ChevronDown size={12} strokeWidth={3} className="text-[#505050]" />
          </button>
        </div>
      </div>

      <div className="mt-[3px] h-[59px] shrink-0 border border-[#a0a0a0] bg-white px-[5px] pt-[3px] leading-4">
        <p className="text-[13px] font-bold">BackColor</p>
        <p>Gets or sets the background color for a cell.</p>
      </div>
    </aside>
  );
}

function StatusBar() {
  return (
    <footer className="flex h-5 shrink-0 items-center border-t border-[#c4c4c4] bg-[#f3f2f0] pl-px pt-[3px] font-[Roboto] text-[11px] text-[#444]">
      <span className="w-[105px]">Ready</span>
      <span className="w-[107px]">Cells</span>
      <span className="w-[156px]">Selection (25,15)(25,15)</span>
      <span>80%</span>
    </footer>
  );
}

export default function App() {
  return (
    <div className="flex h-screen flex-col overflow-hidden bg-[#f0f0f0] font-['Liberation_Sans',sans-serif]">
      <TitleBar />
      <RibbonTabs />
      <Ribbon />
      <FormulaBar />
      <main className="flex min-h-0 flex-1 bg-white">
        <Sheet />
        <PropertyPanel />
      </main>
      <StatusBar />
    </div>
  );
}
